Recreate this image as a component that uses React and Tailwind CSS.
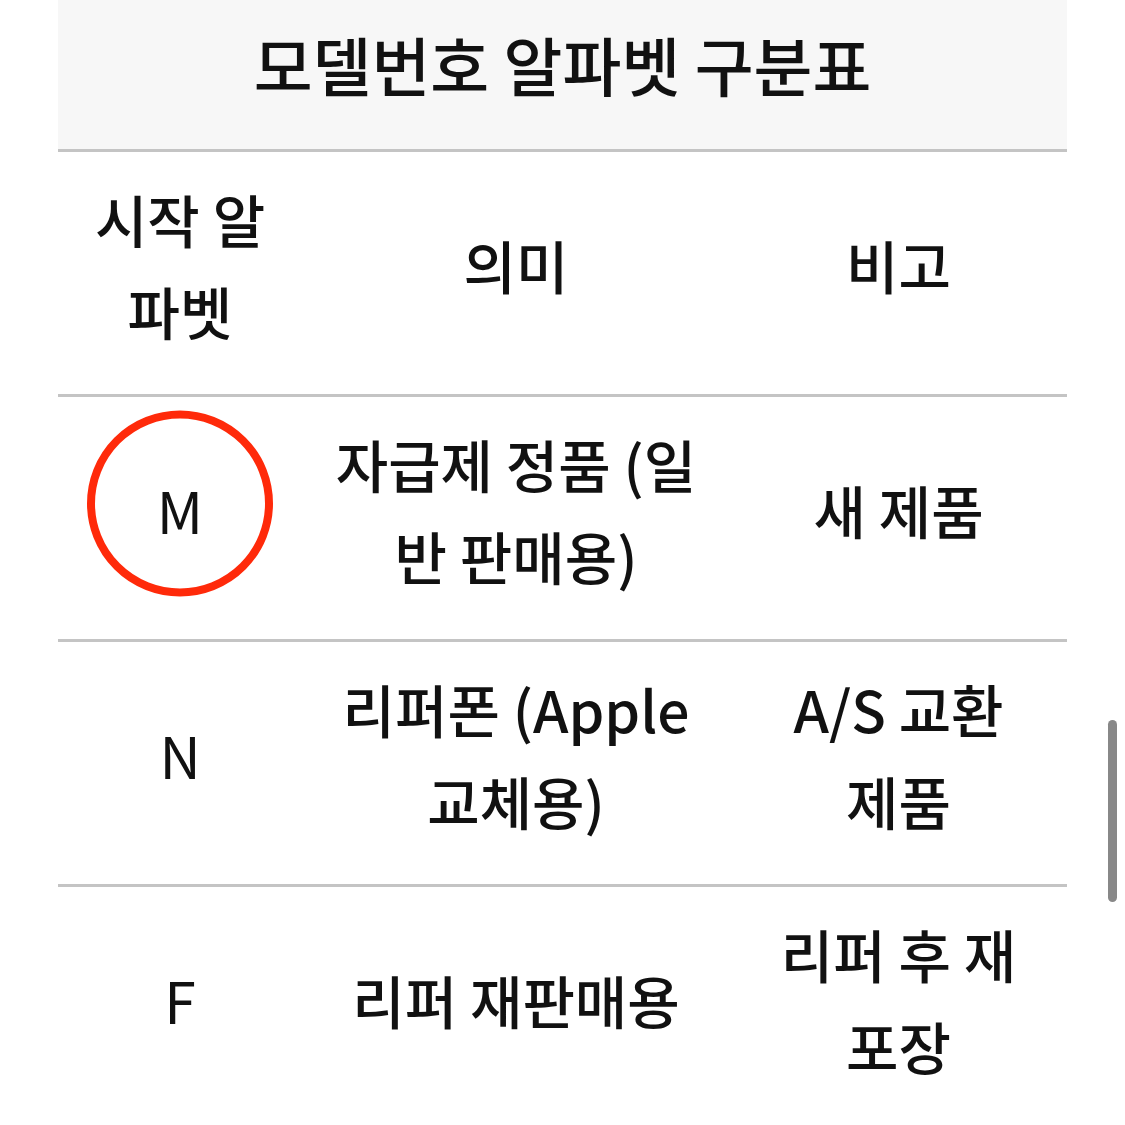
const rows = [
  { code: "M", meaning: "자급제 정품 (일반 판매용)", note: "새 제품", circled: true },
  { code: "N", meaning: "리퍼폰 (Apple 교체용)", note: "A/S 교환 제품" },
  { code: "F", meaning: "리퍼 재판매용", note: "리퍼 후 재포장" },
];

function Cell({ children, className = "" }) {
  return (
    <td className={`text-center align-middle leading-[92px] pb-[18px] ${className}`}>
      {children}
    </td>
  );
}

export default function App() {
  return (
    <div
      className="relative w-[1125px] h-[1125px] overflow-hidden bg-white text-[#111]"
      style={{ fontFamily: '"Noto Sans CJK KR", "Noto Sans", sans-serif' }}
    >
      <table className="ml-[58px] w-[1009px] table-fixed border-collapse text-[57px] font-medium">
        <colgroup>
          <col className="w-[244px]" />
          <col className="w-[428px]" />
          <col className="w-[337px]" />
        </colgroup>
        <thead>
          <tr className="h-[150px] bg-[#f7f7f7] border-b-[3px] border-[#c4c4c4]">
            <th colSpan={3} className="text-center font-medium text-[64px] pb-[22px]">
              모델번호 알파벳 구분표
            </th>
          </tr>
        </thead>
        <tbody>
          <tr className="h-[245px] border-b-[3px] border-[#c4c4c4]">
            <Cell className="px-[30px]">시작 알파벳</Cell>
            <Cell className="px-[30px]">의미</Cell>
            <Cell className="px-[40px]">비고</Cell>
          </tr>
          {rows.map((r) => (
            <tr key={r.code} className="h-[245px] border-b-[3px] border-[#c4c4c4] last:border-b-0">
              <Cell className="px-[30px] font-normal">
                <span className="relative inline-block">
                  {r.code}
                  {r.circled && (
                    <span className="absolute left-1/2 top-1/2 -translate-x-1/2 -translate-y-[53%] w-[186px] h-[186px] rounded-full border-[8px] border-[#ff2a0a]" />
                  )}
                </span>
              </Cell>
              <Cell className="px-[30px]">{r.meaning}</Cell>
              <Cell className="px-[40px]">{r.note}</Cell>
            </tr>
          ))}
        </tbody>
      </table>
      <div className="absolute left-[1108px] top-[720px] w-[9px] h-[182px] rounded-full bg-[#888]" />
    </div>
  );
}
